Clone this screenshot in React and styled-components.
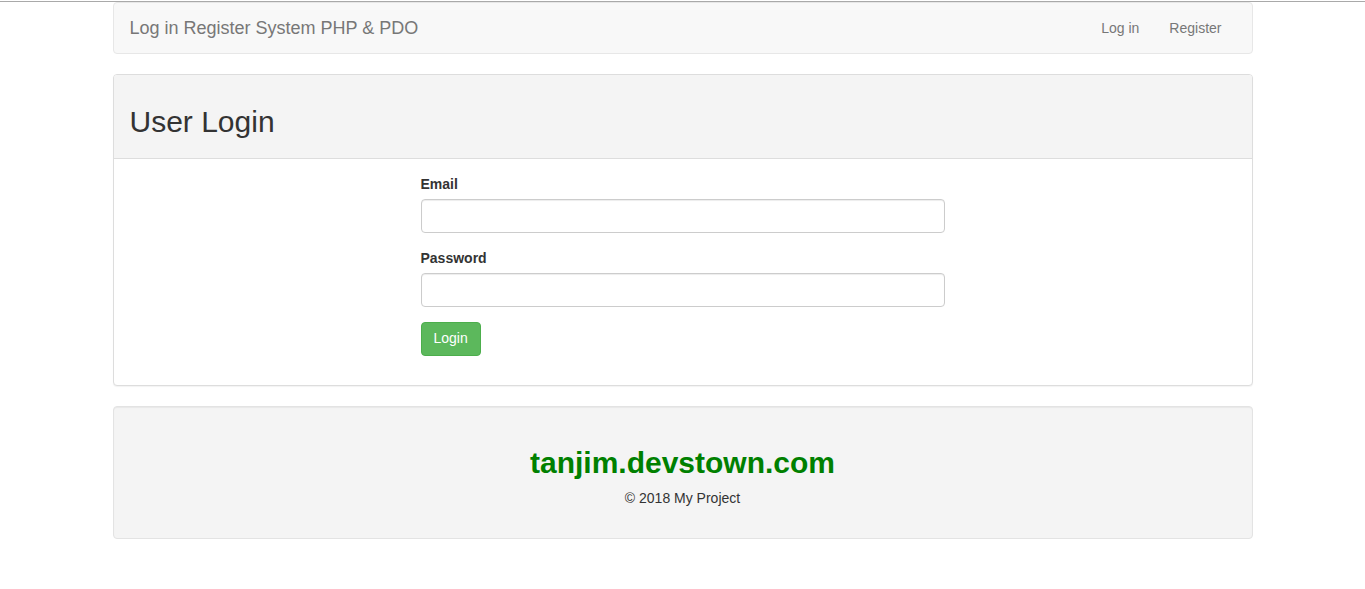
import React from 'react';
import styled, { createGlobalStyle } from 'styled-components';

const GlobalStyle = createGlobalStyle`
  * { box-sizing: border-box; }
  body {
    margin: 0;
    background: #fff;
    color: #333;
    font-family: "Liberation Sans", Arial, sans-serif;
    font-size: 14px;
    line-height: 1.42857;
  }
`;

const TopLine = styled.div`
  height: 1px;
  margin-top: 1px;
  background: #a9a9a9;
`;

const Container = styled.div`
  width: 1140px;
  margin: 0 auto;
`;

const Navbar = styled.nav`
  display: flex;
  justify-content: space-between;
  align-items: center;
  min-height: 52px;
  margin-bottom: 20px;
  padding: 0 15px 0 1px;
  background: #f8f8f8;
  border: 1px solid #e7e7e7;
  border-radius: 4px;
`;

const Brand = styled.a`
  padding: 15px;
  font-size: 18px;
  line-height: 20px;
  color: #777;
  text-decoration: none;
`;

const NavLinks = styled.ul`
  display: flex;
  margin: 0;
  padding: 0;
  list-style: none;
`;

const NavLink = styled.a`
  display: block;
  padding: 15px;
  line-height: 20px;
  color: #777;
  text-decoration: none;
`;

const Panel = styled.div`
  margin-bottom: 20px;
  background: #fff;
  border: 1px solid #ddd;
  border-radius: 4px;
  box-shadow: 0 1px 1px rgba(0, 0, 0, 0.05);
`;

const PanelHeading = styled.div`
  padding: 10px 16px;
  background: #f4f4f4;
  border-bottom: 1px solid #ddd;
  border-radius: 3px 3px 0 0;
`;

const Title = styled.h2`
  margin: 20px 0 10px;
  font-size: 30px;
  font-weight: 500;
  line-height: 1.1;
  color: #333;
`;

const PanelBody = styled.div`
  padding: 15px 15px 14px;
`;

const Form = styled.form`
  width: 524px;
  margin: 0 auto;
`;

const FormGroup = styled.div`
  margin-bottom: 15px;
`;

const Label = styled.label`
  display: block;
  margin-bottom: 5px;
  padding-top: 1px;
  line-height: 19px;
  font-weight: 700;
`;

const Input = styled.input`
  display: block;
  width: 100%;
  height: 34px;
  padding: 6px 12px;
  font-size: 14px;
  font-family: inherit;
  color: #555;
  background: #fff;
  border: 1px solid #ccc;
  border-radius: 4px;
  box-shadow: inset 0 1px 1px rgba(0, 0, 0, 0.075);
  outline: none;
`;

const Button = styled.button`
  height: 34px;
  padding: 6px 12px;
  font-size: 14px;
  font-family: inherit;
  line-height: 1.42857;
  color: #fff;
  background: #5cb85c;
  border: 1px solid #4cae4c;
  border-radius: 4px;
  cursor: pointer;
`;

const Well = styled.footer`
  min-height: 20px;
  padding: 19px;
  margin-bottom: 20px;
  text-align: center;
  background: #f4f4f4;
  border: 1px solid #e3e3e3;
  border-radius: 4px;
  box-shadow: inset 0 1px 1px rgba(0, 0, 0, 0.05);
`;

const Site = styled.h2`
  margin: 20px 0 10px;
  font-size: 30px;
  font-weight: 700;
  line-height: 1.1;
  color: green;
`;

const Copy = styled.p`
  margin: 0 0 10px;
`;

export default function App() {
  return (
    <>
      <GlobalStyle />
      <TopLine />
      <Container>
        <Navbar>
          <Brand href="#">Log in Register System PHP &amp; PDO</Brand>
          <NavLinks>
            <li><NavLink href="#">Log in</NavLink></li>
            <li><NavLink href="#">Register</NavLink></li>
          </NavLinks>
        </Navbar>

        <Panel>
          <PanelHeading>
            <Title>User Login</Title>
          </PanelHeading>
          <PanelBody>
            <Form onSubmit={(e) => e.preventDefault()}>
              <FormGroup>
                <Label htmlFor="email">Email</Label>
                <Input id="email" type="email" />
              </FormGroup>
              <FormGroup>
                <Label htmlFor="password">Password</Label>
                <Input id="password" type="password" />
              </FormGroup>
              <FormGroup>
                <Button type="submit">Login</Button>
              </FormGroup>
            </Form>
          </PanelBody>
        </Panel>

        <Well>
          <Site>tanjim.devstown.com</Site>
          <Copy>&copy; 2018 My Project</Copy>
        </Well>
      </Container>
    </>
  );
}
